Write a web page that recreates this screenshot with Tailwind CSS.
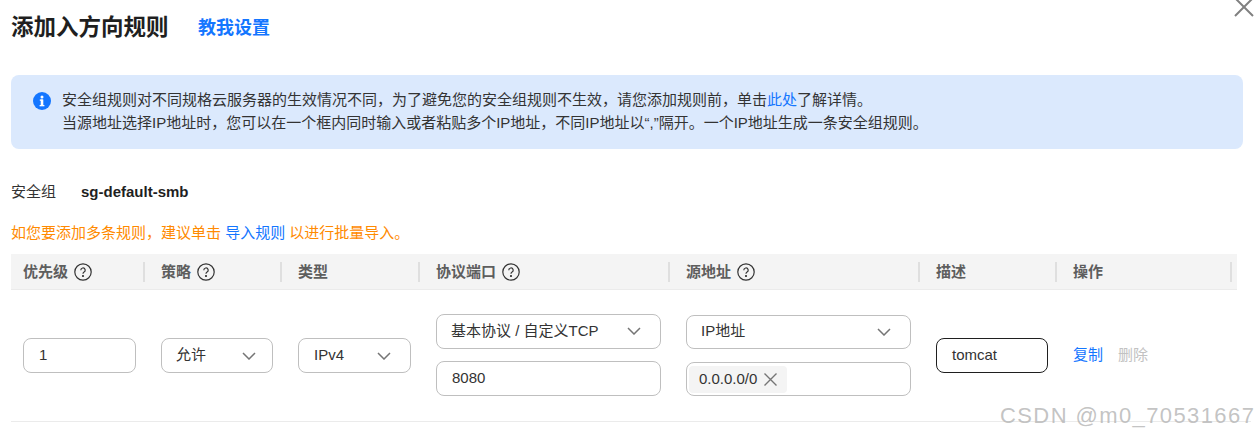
<!DOCTYPE html>
<html lang="zh-CN">
<head>
    <meta charset="UTF-8">
    <title>添加入方向规则</title>
    <script src="https://cdn.jsdelivr.net/npm/@tailwindcss/browser@4"></script>
</head>
<body class="bg-white text-[#252b3a] text-[15px] font-['Liberation_Sans','Noto_Sans_CJK_SC',sans-serif] overflow-hidden">
    <div class="relative w-[1260px] h-[437px] overflow-hidden px-[11px]">
        <!-- close -->
        <svg class="absolute left-[1234px] top-[-3px]" width="20" height="20" viewBox="0 0 20 20" fill="none" stroke="#808080" stroke-width="2"><path d="M1 1 L19 19 M19 1 L1 19"/></svg>

        <!-- title -->
        <div class="flex items-center h-[54px] pt-[2px]">
            <h1 class="text-[22.5px] leading-[30px] font-bold text-[#1f1f1f] w-[187px]">添加入方向规则</h1>
            <a class="text-lg font-bold text-[#1476ff]">教我设置</a>
        </div>

        <!-- notice -->
        <div class="mt-[21px] w-[1232px] h-[74px] bg-[#dbe9fd] rounded-lg flex pl-[22px] pt-[13px] leading-[23px] text-[#333]">
            <svg class="mt-[4px] shrink-0" width="18" height="18" viewBox="0 0 18 18"><circle cx="9" cy="9" r="9" fill="#1476ff"/><rect x="7.7" y="7.5" width="2.6" height="6.5" fill="#fff"/><rect x="6.8" y="7.5" width="3" height="1.3" fill="#fff"/><rect x="6.6" y="13" width="4.8" height="1.3" fill="#fff"/><circle cx="9" cy="5" r="1.5" fill="#fff"/></svg>
            <div class="ml-[11px]">
                <p>安全组规则对不同规格云服务器的生效情况不同，为了避免您的安全组规则不生效，请您添加规则前，单击<a class="text-[#1476ff]">此处</a>了解详情。</p>
                <p>当源地址选择IP地址时，您可以在一个框内同时输入或者粘贴多个IP地址，不同IP地址以“,”隔开。一个IP地址生成一条安全组规则。</p>
            </div>
        </div>

        <!-- security group -->
        <div class="flex mt-[32px] h-[22px] items-center text-[#333]">
            <span class="w-[70px]">安全组</span>
            <span class="font-bold text-[#1f1f1f]">sg-default-smb</span>
        </div>

        <p class="mt-[19px] leading-[22px] text-[#ff8a00]">如您要添加多条规则，建议单击 <a class="text-[#1476ff]">导入规则</a> 以进行批量导入。</p>

        <!-- table header -->
        <div class="mt-[10px] w-[1226px] h-[36px] bg-[#f4f4f4] border-b border-[#ebebeb] grid grid-cols-[134px_137px_138px_250px_250px_137px_175px] items-center font-bold text-[#5e5e5e]">
            <div class="h-5 pl-3 border-r-2 border-[#dfdfdf] flex items-center gap-[6px]"><span class="pt-[2px]">优先级</span>
                <svg width="18" height="18" viewBox="0 0 18 18" fill="none" stroke="#333" stroke-width="1.2"><circle cx="9" cy="9" r="8.2"/><path d="M6.8 7.2a2.2 2.2 0 1 1 3.3 1.900c-.7.4-1.100.8-1.100 1.700"/><circle cx="9" cy="13" r=".5" fill="#333"/></svg>
            </div>
            <div class="h-5 pl-4 border-r-2 border-[#dfdfdf] flex items-center gap-[6px]"><span class="pt-[2px]">策略</span>
                <svg width="18" height="18" viewBox="0 0 18 18" fill="none" stroke="#333" stroke-width="1.2"><circle cx="9" cy="9" r="8.2"/><path d="M6.8 7.2a2.2 2.2 0 1 1 3.3 1.900c-.7.4-1.100.8-1.100 1.700"/><circle cx="9" cy="13" r=".5" fill="#333"/></svg>
            </div>
            <div class="h-5 pl-4 border-r-2 border-[#dfdfdf] flex items-center"><span class="pt-[2px]">类型</span></div>
            <div class="h-5 pl-4 border-r-2 border-[#dfdfdf] flex items-center gap-[6px]"><span class="pt-[2px]">协议端口</span>
                <svg width="18" height="18" viewBox="0 0 18 18" fill="none" stroke="#333" stroke-width="1.2"><circle cx="9" cy="9" r="8.2"/><path d="M6.8 7.2a2.2 2.2 0 1 1 3.3 1.900c-.7.4-1.100.8-1.100 1.700"/><circle cx="9" cy="13" r=".5" fill="#333"/></svg>
            </div>
            <div class="h-5 pl-4 border-r-2 border-[#dfdfdf] flex items-center gap-[6px]"><span class="pt-[2px]">源地址</span>
                <svg width="18" height="18" viewBox="0 0 18 18" fill="none" stroke="#333" stroke-width="1.2"><circle cx="9" cy="9" r="8.2"/><path d="M6.8 7.2a2.2 2.2 0 1 1 3.3 1.900c-.7.4-1.100.8-1.100 1.700"/><circle cx="9" cy="13" r=".5" fill="#333"/></svg>
            </div>
            <div class="h-5 pl-4 border-r-2 border-[#dfdfdf] flex items-center"><span class="pt-[2px]">描述</span></div>
            <div class="h-5 pl-4 border-r-2 border-[#dfdfdf] flex items-center"><span class="pt-[2px]">操作</span></div>
        </div>

        <!-- table row -->
        <div class="w-[1240px] h-[132px] border-b border-[#ebebeb] grid grid-cols-[134px_137px_138px_250px_250px_137px_175px] items-center text-[#333]">
            <div class="pl-3">
                <div class="w-[113px] h-[35px] border border-[#bfbfbf] rounded-lg flex items-center pl-[15px]">1</div>
            </div>
            <div class="pl-4">
                <div class="w-[112px] h-[35px] border border-[#bfbfbf] rounded-lg flex items-center justify-between pl-[14px] pr-[16px]">允许
                    <svg width="14" height="8" viewBox="0 0 14 8" fill="none" stroke="#757575" stroke-width="1.5"><path d="M1 1l6 6 6-6"/></svg>
                </div>
            </div>
            <div class="pl-4">
                <div class="w-[113px] h-[35px] border border-[#bfbfbf] rounded-lg flex items-center justify-between pl-[15px] pr-[19px]">IPv4
                    <svg width="14" height="8" viewBox="0 0 14 8" fill="none" stroke="#757575" stroke-width="1.5"><path d="M1 1l6 6 6-6"/></svg>
                </div>
            </div>
            <div class="pl-4 pb-[2px] flex flex-col gap-3">
                <div class="w-[225px] h-[35px] border border-[#bfbfbf] rounded-lg flex items-center justify-between pl-[14px] pr-[19px]">基本协议 / 自定义TCP
                    <svg width="14" height="8" viewBox="0 0 14 8" fill="none" stroke="#757575" stroke-width="1.5"><path d="M1 1l6 6 6-6"/></svg>
                </div>
                <div class="w-[225px] h-[35px] border border-[#bfbfbf] rounded-lg flex items-center pl-[15px]">8080</div>
            </div>
            <div class="pl-4 flex flex-col gap-[13px]">
                <div class="w-[225px] h-[34px] border border-[#bfbfbf] rounded-lg flex items-center justify-between pl-[14px] pr-[19px]"><span class="pb-[2px]">IP地址</span>
                    <svg width="14" height="8" viewBox="0 0 14 8" fill="none" stroke="#757575" stroke-width="1.5"><path d="M1 1l6 6 6-6"/></svg>
                </div>
                <div class="w-[225px] h-[34px] border border-[#bfbfbf] rounded-lg flex items-center pl-[2px]">
                    <span class="h-[27px] w-[98px] bg-[#f4f4f4] rounded flex items-center gap-[7px] pl-[10px]">0.0.0.0/0
                        <svg width="13" height="13" viewBox="0 0 13 13" fill="none" stroke="#757575" stroke-width="1.4"><path d="M.5.5l12 12M12.500.5l-12 12"/></svg>
                    </span>
                </div>
            </div>
            <div class="pl-4">
                <div class="w-[112px] h-[35px] border border-[#1f1f1f] rounded-lg flex items-center pl-[15px]">tomcat</div>
            </div>
            <div class="pl-4 flex gap-[15px]">
                <a class="text-[#1476ff]">复制</a>
                <a class="text-[#c2c2c2]">删除</a>
            </div>
        </div>

        <!-- watermark -->
        <span class="absolute left-[1000px] top-[402px] text-[22px] leading-[28px] tracking-[1.4px] text-[#b4b4b4]/80 whitespace-nowrap">CSDN @m0_70531667</span>
    </div>
</body>
</html>
